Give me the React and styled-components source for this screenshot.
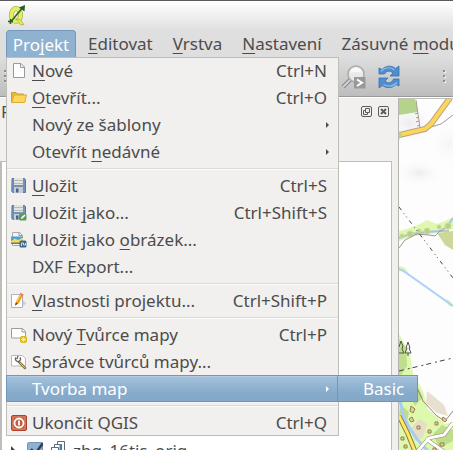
import React from "react";
import styled, { createGlobalStyle, css } from "styled-components";

const GlobalStyle = createGlobalStyle`
  * { box-sizing: border-box; }
  body {
    margin: 0;
    font-family: "Noto Sans", "Open Sans", sans-serif;
    font-size: 17px;
    color: #4c4c4c;
    overflow: hidden;
  }
  button, input { font: inherit; color: inherit; margin: 0; }
`;

const highlight = css`
  color: #ffffff;
  border: 1px solid #6f97bb;
  background: linear-gradient(#a4c2dc, #86aacb 70%, #85a8c8);
  box-shadow: inset 0 1px #b4cde2;
`;

const Window = styled.main`
  display: flex;
  flex-direction: column;
  height: 100vh;
  min-height: 440px;
  background: #f1f0ee;
`;

const Chrome = styled.header`
  border-top: 1px solid #5c5a5c;
  background: linear-gradient(#ffffff, #dfdfdf 30px, #dedede 55px);
`;

const TitleBar = styled.div`
  height: 29px;
  padding: 3px 7px;
`;

const MenuBar = styled.nav`
  position: relative;
  display: flex;
  height: 27px;
  padding-left: 6px;
`;

const MenuTitle = styled.button`
  flex: none;
  padding: 0 10px;
  border: 0;
  line-height: 27px;
  white-space: nowrap;
  background: none;

  &[aria-expanded="true"] {
    width: 70px;
    padding: 0;
    margin-right: 2px;
    border: 1px solid #7599ba;
    border-bottom: 0;
    border-radius: 4px 4px 0 0;
    color: #ffffff;
    background: #8fb2d1;
  }
`;

const Mnemonic = styled.span`
  text-decoration: underline 1px;
  text-underline-offset: 3px;
  text-decoration-skip-ink: none;
`;

const MenuPopup = styled.div`
  position: absolute;
  z-index: 2;
  top: 27px;
  left: 6px;
  width: 333px;
  background: #f1f0ee;
  box-shadow: inset 0 0 0 1px #bebdb8;
`;

const MenuItem = styled.button`
  display: flex;
  align-items: center;
  gap: 5px;
  width: 100%;
  height: 27px;
  padding: 0 12px 0 5px;
  border: 1px solid transparent;
  border-width: 1px 0;
  text-align: left;
  white-space: nowrap;
  line-height: 25px;
  background: none;
  ${(p) => p.$active && highlight}
  ${(p) => p.$active && "padding: 0 11px 0 4px;"}
`;

const IconSlot = styled.span`
  flex: none;
  display: flex;
  width: 16px;
  height: 16px;
`;

const ItemLabel = styled.span`
  flex: 1;
`;

const ArrowIcon = styled.svg`
  flex: none;
  width: 3px;
  height: 6px;
  margin-right: -2px;
  fill: currentColor;
`;

const Separator = styled.hr`
  height: 2px;
  margin: 3px 1px 2px;
  border: 0;
  border-top: 1px solid #dad9d6;
  background: #fbfbfa;
`;

const SubMenu = styled.div`
  position: absolute;
  left: 331px;
  top: 318px;
  width: 81px;
`;

const SubMenuItem = styled.button`
  display: block;
  width: 100%;
  height: 27px;
  padding: 0 12px 0 25px;
  line-height: 25px;
  text-align: left;
  ${highlight}
`;

const ToolBar = styled.div`
  display: flex;
  align-items: center;
  height: 40px;
  padding: 0 7px 0 4px;
  border-bottom: 1px solid #989898;
  background: linear-gradient(#dedede, #bdbdbd);
`;

const ToolGroup = styled.div`
  display: flex;
  gap: 12px;
  margin-left: 334px;
  flex: 1;
`;

const ToolButton = styled.button`
  display: flex;
  padding: 0;
  border: 0;
  background: none;
`;

const Workspace = styled.div`
  display: flex;
  flex: 1;
  min-height: 0;
  border-top: 1px solid #ffffff;
`;

const Dock = styled.section`
  display: flex;
  flex-direction: column;
  flex: 0 0 392px;
  min-width: 0;
`;

const DockHeader = styled.div`
  display: flex;
  align-items: center;
  gap: 6px;
  height: 26px;
  padding: 0 3px 0 1px;
`;

const DockTitle = styled.span`
  flex: 1;
`;

const DockButton = styled.button`
  display: flex;
  width: 11px;
  height: 11px;
  padding: 0;
  border: 0;
  background: none;
`;

const LayerTree = styled.div`
  display: flex;
  flex-direction: column;
  flex: 1;
  margin-top: 37px;
  padding: 275px 0 0 8px;
  border: 2px solid #bebdb8;
  border-width: 1px 1px 0 2px;
  background: #ffffff;
  overflow: hidden;
`;

const LayerRow = styled.label`
  flex: none;
  display: flex;
  align-items: center;
  height: 26px;
  white-space: nowrap;
`;

const LayerCheck = styled.input`
  appearance: none;
  width: 16px;
  height: 16px;
  margin: 0 8px 0 12px;
  border: 1px solid #6f97bb;
  border-radius: 2px;
  background: #8fb2d1;
`;

const CheckBox = styled.span`
  display: grid;
  > * { grid-area: 1 / 1; }
  svg { margin-left: 13px; pointer-events: none; z-index: 1; }
`;

const MapCanvas = styled.div`
  flex: 1;
  min-width: 0;
  margin-left: 6px;
  border-left: 1px solid #b5b3ae;
  border-top: 1px solid #bebdb8;
  background: #fefdfe;

  svg { display: block; width: 100%; height: 100%; }
`;

const Floppy = () => (
  <>
    <path d="M1 .5h12.5l1 1V14.5H1.8L.8 13.500z" fill="#6f92bb" stroke="#587ba6" />
    <rect x="3" y="0" width="9" height="7" fill="#e3e3e0" />
    <path d="M3 2.500h9M3 5.500h9" stroke="#b9bab8" />
    <path d="M3 9h9v6H3z" fill="#c9cbd0" />
    <rect x="5" y="10.500" width="2.500" height="4" fill="#48658b" />
  </>
);

const icons = {
  newFile: (
    <path d="M2.500 .5h7.500l3.500 3.500v10.500h-11zM9.500 .8V4.500h4" fill="#fefefe" stroke="#999" />
  ),
  open: (
    <>
      <path d="M.5 12.500V2.500h4.500l1 1.500h6.500v2" fill="#e6b93a" stroke="#cfa02c" />
      <path d="M.7 12.500 3 5h12.500l-1.800 7.500z" fill="#ffd65c" stroke="#d9ac37" />
    </>
  ),
  save: <Floppy />,
  saveAs: (
    <>
      <Floppy />
      <rect x="8" y="8.500" width="7.500" height="7" rx="1.500" fill="#5c9a5b" />
      <path d="M10 14l.5-2 3-2.500 1 1-3 3z" fill="#fff" />
    </>
  ),
  image: (
    <>
      <path d="M1.500 .5h7l3 3v10h-10z" fill="#f4f4f2" stroke="#aaa" />
      <path d="M8 .5v3h3.500" fill="none" stroke="#999" />
      <rect x="0" y="4.500" width="12" height="7.500" fill="#4aa0d8" />
      <path d="M0 9l4-2.500L7 8l5-2.500V12H0z" fill="#f2d668" />
      <path d="M0 10.500h12V12H0z" fill="#5b8b4f" />
      <rect x="8.500" y="8.500" width="7" height="7" rx="1.500" fill="#416888" />
      <path d="M10.500 14v-3h2v2h2v-2" fill="none" stroke="#d3e0e9" />
    </>
  ),
  properties: (
    <>
      <path d="M.5 1.500h11v13H.5z" fill="#fff" stroke="#aeb2ba" />
      <path d="M12 7l3.500 3.500L12 13z" fill="#cdd2da" />
      <path d="M4 12.500l1-4L9.500 0l3 1.500L8 10z" fill="#f99b1c" />
      <path d="M9.500 0l3 1.500-1 2-3-1.500z" fill="#e87370" />
      <path d="M4 12.500l.8-3L7 10.800z" fill="#5a442e" />
      <path d="M5.800 8.500l4-7" stroke="#ffd56b" />
    </>
  ),
  composer: (
    <>
      <path d="M.5 1.500h11l3 3v6.500H.5z" fill="#fff" stroke="#9d9d9d" />
      <path d="M11 1.500v3.500h3.500" fill="none" stroke="#999" />
      <rect x="9" y="9" width="7" height="7" rx="2" fill="#d8b820" />
      <path d="M12.500 10v5M10 12.500h5M10.700 10.700l3.600 3.600M14.300 10.700l-3.600 3.600" stroke="#fff4a0" strokeWidth=".8" />
    </>
  ),
  manager: (
    <>
      <path d="M.5 1.500h11l3 3V12H.5z" fill="#fff" stroke="#b8b8b8" />
      <path d="M8 8l6 6" stroke="#8c7b3a" strokeWidth="2.500" strokeLinecap="round" />
      <path d="M9 9l4.500 4.500" stroke="#e5c750" strokeLinecap="round" />
      <path d="M5 3.500a2.500 2.500 0 1 0 4 0M6 5l1-3" fill="none" stroke="#666" strokeWidth="1.300" />
    </>
  ),
  quit: (
    <>
      <rect x=".5" y=".5" width="15" height="15" rx="1.500" fill="#c65a3d" stroke="#ad4429" />
      <rect x="2" y="2" width="12" height="12" fill="none" stroke="#db8b74" />
      <circle cx="8" cy="8" r="4.500" fill="none" stroke="#fff" strokeWidth="1.800" />
      <path d="M8 5.500v5" stroke="#fff" strokeWidth="1.800" />
    </>
  ),
};

const items = [
  { icon: "newFile", label: ["", "N", "ové"], keys: "Ctrl+N" },
  { icon: "open", label: ["", "O", "tevřít..."], keys: "Ctrl+O" },
  { label: ["Nový ze šablony"], arrow: true },
  { label: ["Otevřít ", "n", "edávné"], arrow: true },
  null,
  { icon: "save", label: ["", "U", "ložit"], keys: "Ctrl+S" },
  { icon: "saveAs", label: ["Uložit ", "j", "ako..."], keys: "Ctrl+Shift+S" },
  { icon: "image", label: ["Uložit jako ", "o", "brázek..."] },
  { label: ["DXF Export..."] },
  null,
  { icon: "properties", label: ["", "V", "lastnosti projektu..."], keys: "Ctrl+Shift+P" },
  null,
  { icon: "composer", label: ["Nový ", "T", "vůrce mapy"], keys: "Ctrl+P" },
  { icon: "manager", label: ["Správce tvůrců mapy..."] },
  { label: ["Tvorba map"], arrow: true, active: true },
  null,
  { icon: "quit", label: ["Ukončit QGIS"], keys: "Ctrl+Q" },
];

const titles = [
  ["", "E", "ditovat"],
  ["", "V", "rstva"],
  ["", "N", "astavení"],
  ["Zásuvné ", "m", "odu"],
];

const Label = ({ parts: [before, key, after] }) => (
  <>
    {before}
    {key && <Mnemonic>{key}</Mnemonic>}
    {after}
  </>
);

const Logo = () => (
  <svg width="20" height="22" viewBox="0 0 20 22" aria-label="QGIS">
    <ellipse cx="9" cy="11" rx="4.500" ry="6.500" fill="none" stroke="#9fa635" strokeWidth="5" />
    <ellipse cx="9" cy="11" rx="4.500" ry="6.500" fill="none" stroke="#e4ee61" strokeWidth="3.800" />
    <path d="M9 15l5 6 3-.5-4-5z" fill="#e4ee61" stroke="#9fa635" strokeWidth=".7" />
    <path d="M4 17.500L14.500 5" stroke="#286428" strokeWidth="1.600" />
    <path d="M18 1l-.5 6.500-5.500-4z" fill="#236023" />
    <path d="M1 17.500h5M3.500 15v5" stroke="#236023" strokeWidth="1.600" />
  </svg>
);

const Grip = () => (
  <svg width="3" height="13" viewBox="0 0 3 13" aria-hidden="true">
    <path d="M1 1h2v2H1zM1 6h2v2H1zM1 11h2v2H1z" fill="#f4f4f4" />
    <path d="M0 0h2v2H0zM0 5h2v2H0zM0 10h2v2H0z" fill="#8c8c8c" />
  </svg>
);

const ZoomIcon = () => (
  <svg width="25" height="24" viewBox="0 0 25 24">
    <path d="M2 22l8-8" stroke="#858585" strokeWidth="4" />
    <path d="M2 22l8-8" stroke="#d2d2d2" strokeWidth="2" />
    <circle cx="15" cy="9" r="8" fill="#e9e9e7" stroke="#aaa" strokeWidth="1.500" />
    <path d="M9.500 8a5.500 5.500 0 0 1 11 0q-5-2-11 0z" fill="#f8f8f8" />
    <rect x="13" y="12" width="11.500" height="11.500" fill="#999" />
    <path d="M16 14.500l5 3.200-5 3.300" fill="none" stroke="#fff" strokeWidth="2" />
  </svg>
);

const RefreshIcon = () => (
  <svg width="22" height="24" viewBox="0 0 22 24">
    <path d="M1 9V3l3 1.500C8 .3 14 .3 17.500 3.500L21 1v10h-9l3-3c-3-3-7-2-8.500 1z" fill="#4c8ed0" stroke="#3972b4" strokeWidth=".8" />
    <path d="M21 14v7l-3-1.500c-4 4-10 4-13.500 1L1 23V13h9l-3 3c3 3 7 2 8.500-2z" fill="#4c8ed0" stroke="#3972b4" strokeWidth=".8" />
    <path d="M3 6.500c4-5 10-4.500 13.500-1.500M19 17.500c-4 4.500-10 4.500-13.500 2" fill="none" stroke="#91bce8" strokeWidth="1.200" />
  </svg>
);

const MapDrawing = () => (
  <svg aria-label="Mapa">
    <defs>
      <radialGradient id="hill">
        <stop offset="0" stopColor="#eeecee" />
        <stop offset="1" stopColor="#fefdfe" stopOpacity="0" />
      </radialGradient>
    </defs>
    <ellipse cx="10" cy="24" rx="30" ry="24" fill="url(#hill)" />
    <ellipse cx="20" cy="74" rx="24" ry="14" fill="url(#hill)" />
    <ellipse cx="50" cy="45" rx="20" ry="25" fill="url(#hill)" opacity=".5" />
    <path d="M0 0h16l3 13-19 3z" fill="#b5d38b" />
    <path d="M17 1l4 28M19 14l-3 1M20 18l-3 1M20 22l-3 1M21 26l-3 1" fill="none" stroke="#a79c94" />
    <path d="M32 28l10-3 12-9" fill="none" stroke="#a39a91" />
    <path d="M0 36l26-6 6-5L51-1" fill="none" stroke="#b4a47c" strokeWidth="6" />
    <path d="M0 36l26-6 6-5L51-1" fill="none" stroke="#ffd45b" strokeWidth="4" />
    <path d="M0 32l3 3-3 6z" fill="#b9d48f" />

    <path d="M0 132l11-3 10-4 7-4 10 4 8-3 8-4v12l-15 4-25 3-14 5z" fill="#e0f7b0" />
    <path d="M38 134l16-2v19l-8-5z" fill="#cbd89a" />
    <path d="M0 139l11-4 17-2 13-1 7-4 6-9" fill="none" stroke="#9fc5ed" strokeWidth="2" />
    <g fill="#b9cf85" stroke="#c8dc9a">
      <circle cx="3" cy="137" r="2" /><circle cx="11" cy="135" r="3" /><circle cx="20" cy="132" r="2" />
      <circle cx="28" cy="132" r="3" /><circle cx="40" cy="128" r="2" /><circle cx="49" cy="127" r="3" />
    </g>
    <path d="M0 149l6-8 12-6 12 1 6 1 5-5h9" fill="none" stroke="#a3958a" />
    <path d="M0 108l54 71" stroke="#444" strokeDasharray="4 4 1 3 1 4" />
    <path d="M0 167q7 0 9 7l-9-2zM44 200q8-1 10 8l-4-1z" fill="#dff7b0" />
    <path d="M0 170l3 1 51 36" fill="none" stroke="#afd0fa" strokeWidth="2" />

    <path d="M0 235l11 20 3 20 10 17 5 18 17 15 8-2v40H0z" fill="#ddf9ad" />
    <path d="M0 240l7 9 1 18-8 12zM7 289l8-8 9 17-8 9zM1 305l9 8-3 13-7-4zM34 335l9-9 11 5v11l-14 7z" fill="#c0dc8d" />
    <path d="M28 292l17 14 4 11-11-3-11-10z" fill="#e7dfd0" />
    <path d="M11 330l9-10 8 5-4 13-8 4z" fill="#e6ddc5" />
    <path d="M0 272l54-13" stroke="#444" strokeDasharray="5 4 2 3" />
    <path d="M0 248l2-6 2 5-1 3 2 4H0M9 243l-2 6h1l-2 5h6l-2-5h1zM9 254v3" fill="none" stroke="#555" />
    <path d="M1 300l3 16 6 12 8 12 12 13" fill="none" stroke="#a7cdf7" strokeWidth="3" />
    <path d="M0 317l9 18 8 20" fill="none" stroke="#8b7c45" strokeWidth="5" />
    <path d="M0 317l9 18 8 20" fill="none" stroke="#ffe862" strokeWidth="3" />
    <path d="M16 284l8 18 14 15 8 5 8-10" fill="none" stroke="#9e8470" />
    <path d="M17 354l13-15 15-3 9-12M27 340l20 14" fill="none" stroke="#9e8470" strokeWidth="4" />
    <path d="M17 354l13-15 15-3 9-12M27 340l20 14" fill="none" stroke="#fff" strokeWidth="3" />
    <path d="M12 307l4 3-2 4-3-2zM18 327h3v3h-3zM36 323h3v3h-3zM41 344h4v3h-4zM34 349h3v3h-3zM2 338h3v3H2zM5 346h3v3H5zM29 331h3v3h-3zM44 318l4 3-2 2-3-2zM10 320l3-2 2 4-3 1z" fill="#e0cf9d" stroke="#9a7d4c" />
  </svg>
);

export default function App() {
  return (
    <Window>
      <GlobalStyle />
      <Chrome>
        <TitleBar><Logo /></TitleBar>
        <MenuBar>
          <MenuTitle aria-expanded="true">Pro<Mnemonic>j</Mnemonic>ekt</MenuTitle>
          {titles.map((parts) => (
            <MenuTitle key={parts.join("")}><Label parts={parts} /></MenuTitle>
          ))}
          <MenuPopup>
            {items.map((item, i) =>
              item ? (
                <MenuItem key={i} $active={item.active}>
                  <IconSlot>
                    {item.icon && <svg width="16" height="16" viewBox="0 0 16 16">{icons[item.icon]}</svg>}
                  </IconSlot>
                  <ItemLabel><Label parts={item.label} /></ItemLabel>
                  {item.keys && <span>{item.keys}</span>}
                  {item.arrow && <ArrowIcon viewBox="0 0 3 6"><path d="M0 0l3 3-3 3z" /></ArrowIcon>}
                </MenuItem>
              ) : (
                <Separator key={i} />
              )
            )}
            <SubMenu><SubMenuItem>Basic</SubMenuItem></SubMenu>
          </MenuPopup>
        </MenuBar>
      </Chrome>
      <ToolBar>
        <Grip />
        <ToolGroup>
          <ToolButton aria-label="Zoom"><ZoomIcon /></ToolButton>
          <ToolButton aria-label="Obnovit"><RefreshIcon /></ToolButton>
        </ToolGroup>
        <Grip />
      </ToolBar>
      <Workspace>
        <Dock>
          <DockHeader>
            <DockTitle>P</DockTitle>
            <DockButton aria-label="Uvolnit panel">
              <svg width="11" height="11" viewBox="0 0 11 11" fill="none" stroke="#5c5c5c">
                <rect x=".5" y=".5" width="10" height="10" rx="1.500" />
                <path d="M4.500 2.500h4v4h-4zM4.500 4.500h-2v4h4v-2" />
              </svg>
            </DockButton>
            <DockButton aria-label="Zavřít panel">
              <svg width="11" height="11" viewBox="0 0 11 11" fill="none" stroke="#5c5c5c">
                <rect x=".5" y=".5" width="10" height="10" rx="1.500" />
                <path d="M3 3l5 5M8 3l-5 5" strokeWidth="2" />
              </svg>
            </DockButton>
          </DockHeader>
          <LayerTree>
            <LayerRow>
              <svg width="5" height="8" viewBox="0 0 5 8"><path d="M1 0l4 4-4 4z" fill="#444" /></svg>
              <CheckBox>
                <LayerCheck type="checkbox" defaultChecked />
                <svg width="15" height="16" viewBox="0 0 15 16"><path d="M3 7l4 5 8-11" fill="none" stroke="#333f50" strokeWidth="2.500" /></svg>
              </CheckBox>
              <svg width="22" height="18" viewBox="0 0 22 18" fill="#fff" stroke="#5e6b77">
                <path d="M6.500 .5h7v11h-7z" />
                <path d="M3.500 3.500h7v10h-7z" />
                <path d="M.5 6.500h7v10h-7z" />
                <path d="M9.500 3v9" stroke="#4d81b4" strokeWidth="2" />
              </svg>
              zbg_16tis_orig
            </LayerRow>
          </LayerTree>
        </Dock>
        <MapCanvas><MapDrawing /></MapCanvas>
      </Workspace>
    </Window>
  );
}
